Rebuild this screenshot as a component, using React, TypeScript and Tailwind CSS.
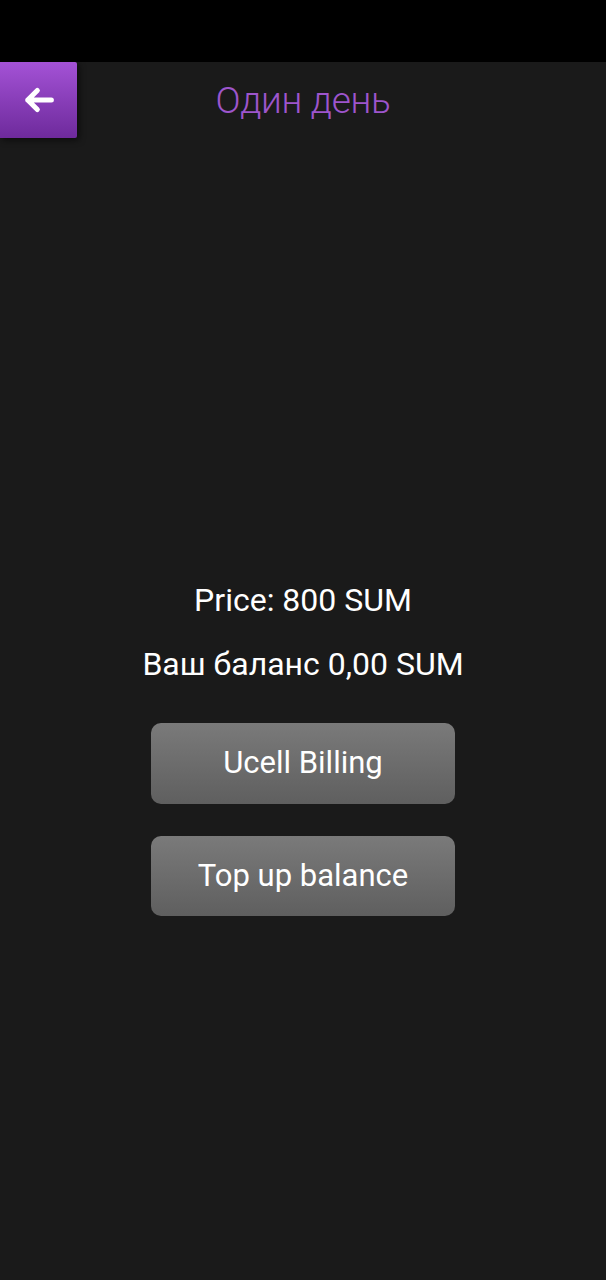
import { useState } from "react";

export default function App() {
  const [balance] = useState("0,00");

  return (
    <main className="min-h-[1280px] w-full bg-[#1a1a1a] flex flex-col font-['Roboto',sans-serif]">
      {/* status bar */}
      <div className="h-[62px] bg-black shrink-0" />

      <header className="relative h-[76px] flex items-center justify-center">
        <button
          aria-label="Back"
          className="absolute left-0 top-0 w-[77px] h-[76px] rounded-r-[2px] bg-gradient-to-b from-[#a452d6] to-[#6e2a9c] shadow-[2px_2px_6px_rgba(0,0,0,0.6)] flex items-center justify-center"
        >
          <svg width="36" height="36" viewBox="0 0 32 32" fill="none">
            <path
              d="M27 16H6M14.5 7.5 6 16l8.5 8.5"
              stroke="white"
              strokeWidth="4.5"
              strokeLinecap="round"
              strokeLinejoin="round"
            />
          </svg>
        </button>
        <h1 className="text-[37px] font-light text-[#9d55cc] leading-none tracking-[-0.3px]">
          Один день
        </h1>
      </header>

      <section className="flex flex-col items-center pt-[446px]">
        <p className="text-[32px] text-white leading-none">Price: 800 SUM</p>
        <p className="text-[32px] text-white leading-none mt-[32px]">Ваш баланс {balance} SUM</p>

        <button className="mt-[43px] w-[304px] h-[81px] rounded-[10px] bg-gradient-to-b from-[#7a7a7a] to-[#5f5f5f] text-white text-[31px]">
          Ucell Billing
        </button>
        <button className="mt-[32px] w-[304px] h-[80px] rounded-[10px] bg-gradient-to-b from-[#7a7a7a] to-[#5f5f5f] text-white text-[31px]">
          Top up balance
        </button>
      </section>
    </main>
  );
}
